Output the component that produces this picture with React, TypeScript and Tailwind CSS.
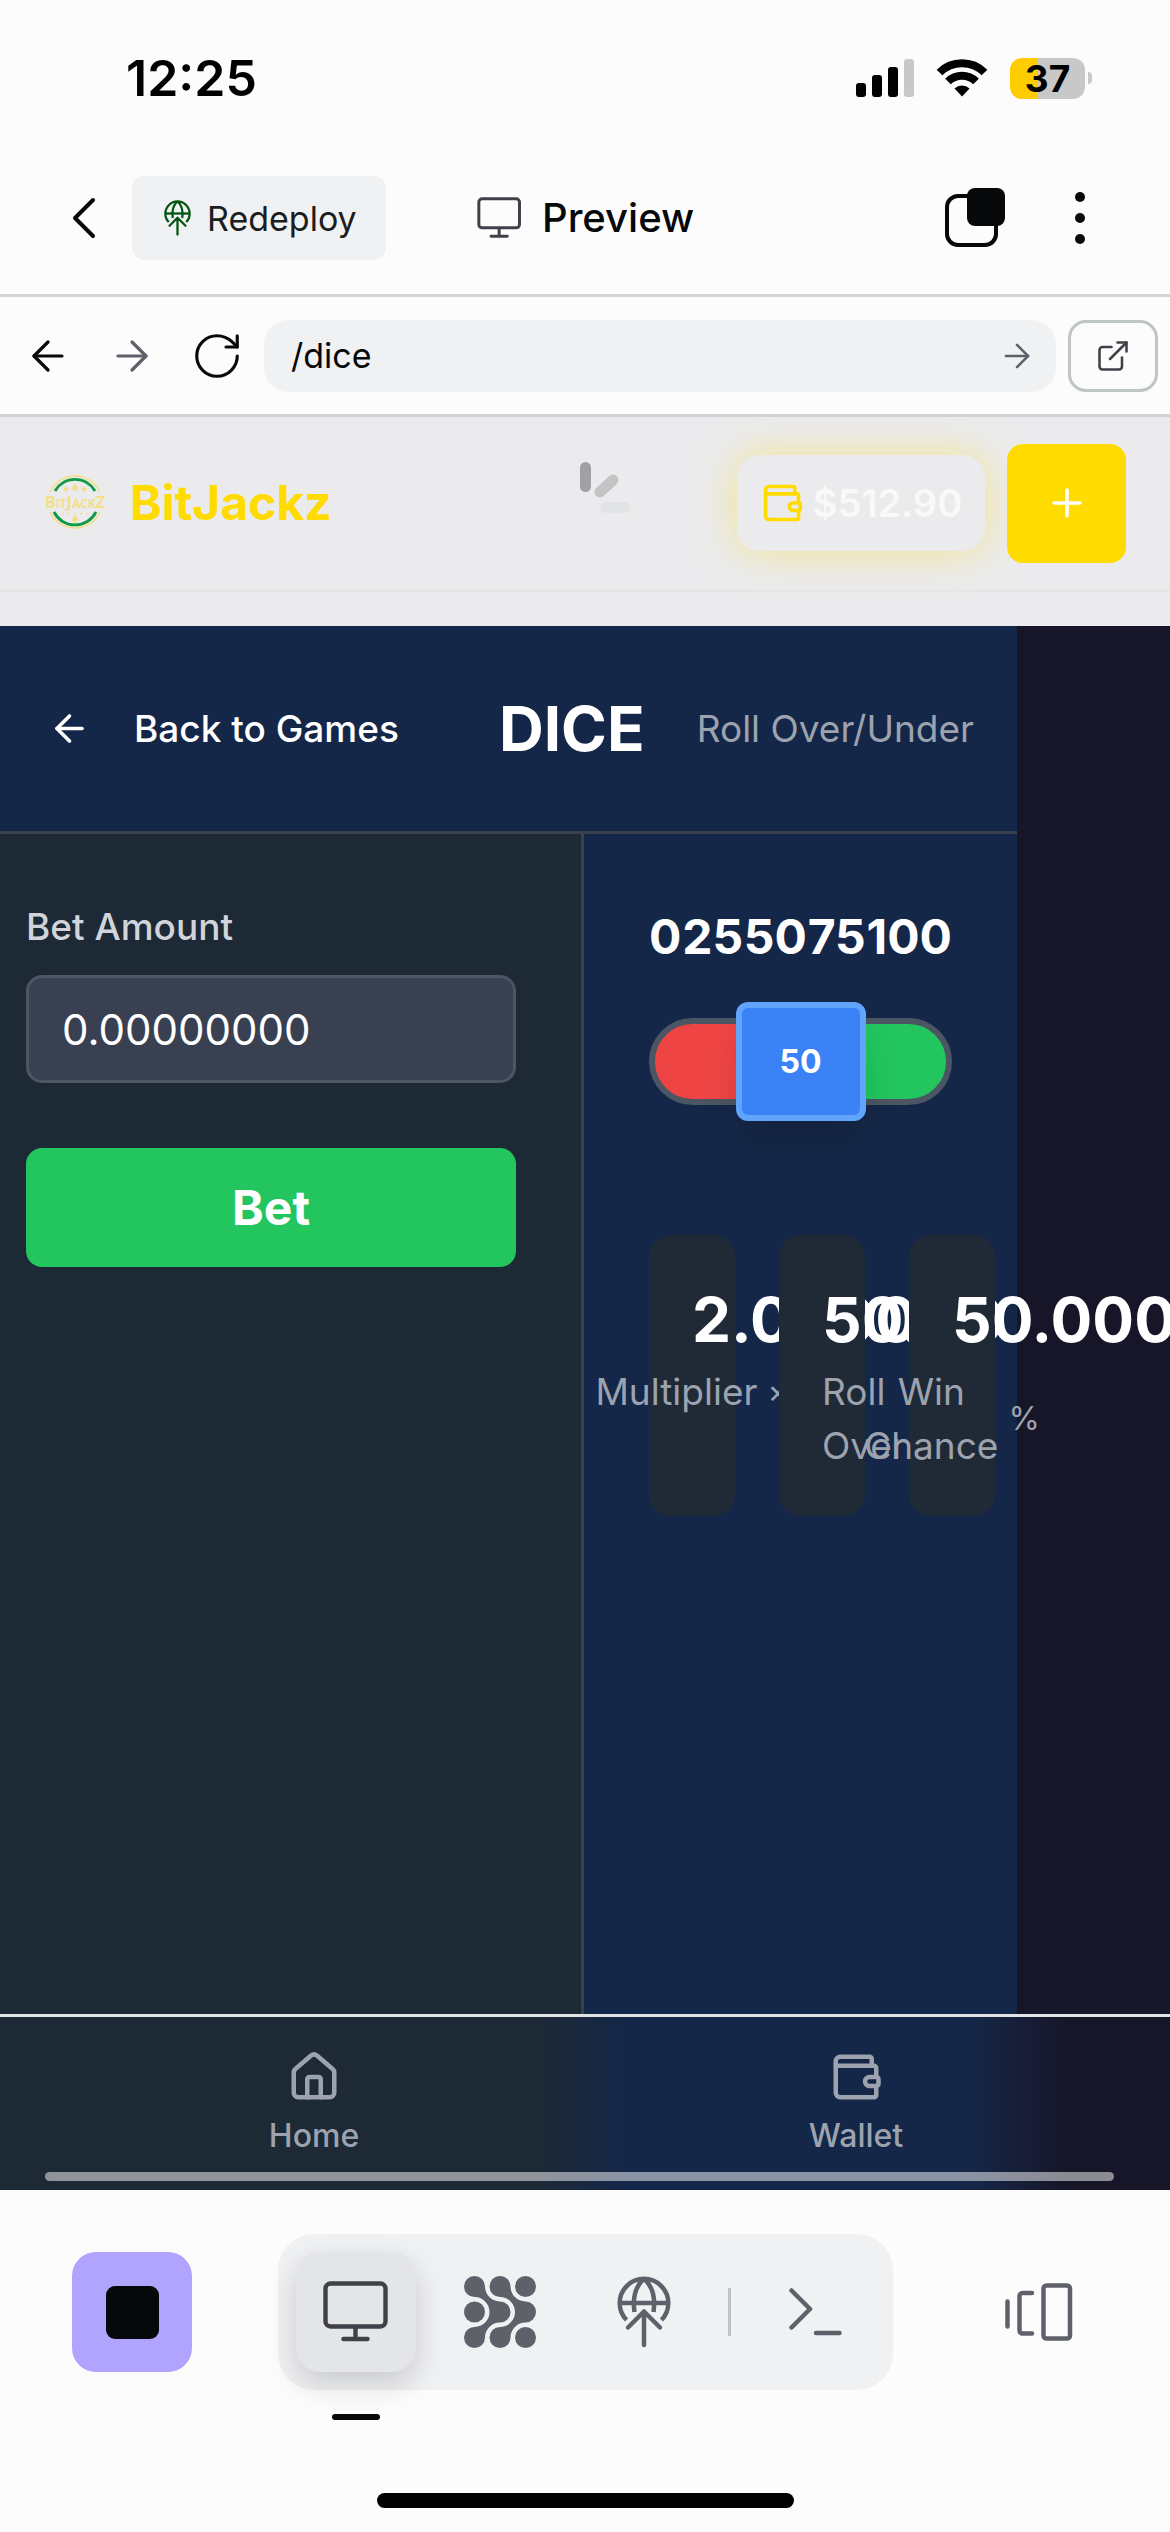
import React from "react";
import { ArrowLeft, ArrowRight, ExternalLink, House, Plus, RotateCw } from "lucide-react";

type IconProps = { className?: string };

function Wallet({ className }: IconProps) {
  return (
    <svg viewBox="0 0 24 24" className={className} fill="none" stroke="currentColor" strokeWidth="2" strokeLinecap="round" strokeLinejoin="round" aria-hidden="true">
      <path d="M19 7V4a1 1 0 0 0-1-1H5a2 2 0 0 0-2 2v14a2 2 0 0 0 2 2h15a1 1 0 0 0 1-1v-4" />
      <path d="M3 6a1 1 0 0 0 1 1h16a1 1 0 0 1 1 1v4h-3a2 2 0 0 0 0 4h3a1 1 0 0 0 1-1v-2a1 1 0 0 0-1-1" />
    </svg>
  );
}

function Monitor({ className }: IconProps) {
  return (
    <svg viewBox="0 0 66 62" className={className} fill="none" stroke="currentColor" strokeWidth="4.4" strokeLinecap="round" aria-hidden="true">
      <rect x="2.5" y="2.5" width="60" height="43" rx="5" />
      <path d="M32.5 46v12M20.5 58h24" />
    </svg>
  );
}

function Deploy({ className }: IconProps) {
  return (
    <svg viewBox="0 0 54 72" className={className} fill="none" stroke="currentColor" strokeWidth="4.5" aria-hidden="true">
      <path d="M9.5 44A24.3 24.3 0 1 1 44.500 44" />
      <path d="M3 27h48" />
      <path d="M26.500 3C19 10 15.500 22 17.500 36M27.500 3C35 10 38.500 22 36.500 36" />
      <path d="M11 51.500 27 35.500l16 16M27 36v33" strokeLinecap="round" strokeLinejoin="round" />
    </svg>
  );
}

function Blobs({ className }: IconProps) {
  const blob =
    "M21 10.5A15 15 0 0 0 36 25.5A10.5 10.5 0 0 1 36 46.5A15 15 0 0 0 21 61.5A10.5 10.5 0 1 1 10.5 51A15 15 0 0 0 10.5 21A10.5 10.5 0 1 1 21 10.5Z";
  return (
    <svg viewBox="0 0 72 72" className={className} fill="currentColor" aria-hidden="true">
      <path d={blob} />
      <path d={blob} transform="translate(25.500 0)" />
      <circle cx="10.500" cy="36" r="10.500" />
      <circle cx="61.500" cy="10.500" r="10.500" />
      <circle cx="61.500" cy="61.500" r="10.500" />
    </svg>
  );
}

function Logo() {
  return (
    <svg viewBox="0 0 62 58" className="h-[58px] w-[62px]" fill="none" aria-hidden="true">
      <g stroke="#f3df86" strokeWidth="1.600">
        <path d="M6 18A27.500 27.500 0 0 1 56 18" />
        <path d="M6 38A27.500 27.500 0 0 0 56 38" />
      </g>
      <g stroke="#119a45" strokeWidth="2.800">
        <path d="M11 17A23 23 0 0 1 51 17" />
        <path d="M10 38A23.500 23.500 0 0 0 52 38" />
      </g>
      <g fill="#f3df86">
        <path d="M31 9.500c1 2 3 3 3 4.800 0 1.400-1.700 1.700-2.400.900l.6 2h-2.400l.6-2c-.7.800-2.400.5-2.400-.9 0-1.800 2-2.800 3-4.800Z" />
        <path d="M22 12c.8 1.500 2.500 2.300 2.500 3.800 0 1.100-1.300 1.400-2 .7l.4 1.500h-1.800l.4-1.500c-.7.700-2 .4-2-.7 0-1.500 1.700-2.300 2.500-3.800Z" />
        <path d="M40 12c.8 1.500 2.500 2.300 2.500 3.800 0 1.100-1.300 1.400-2 .7l.4 1.500h-1.800l.4-1.500c-.7.700-2 .4-2-.7 0-1.500 1.700-2.300 2.500-3.800Z" />
        <path d="M31 41c1.200 2 3.200 3.200 3.200 5 0 1.400-1.700 1.700-2.500.9l.6 2.100h-2.600l.6-2.100c-.8.800-2.500.5-2.500-.9 0-1.800 2-3 3.200-5Z" />
        <circle cx="19" cy="39.500" r="1.100" />
        <circle cx="25" cy="39.500" r="1.100" />
        <circle cx="31" cy="39.500" r="1.100" />
        <circle cx="37" cy="39.500" r="1.100" />
        <circle cx="43" cy="39.500" r="1.100" />
        <text x="31" y="34" textAnchor="middle" fontFamily="Open Sans, sans-serif" fontWeight="700" fontSize="16">
          B<tspan fontSize="12">IT</tspan>J<tspan fontSize="12">ACK</tspan>Z
        </text>
      </g>
    </svg>
  );
}

function StatusBar() {
  return (
    <div className="flex h-[156px] items-center justify-between pr-[78px] pl-[126px] text-black">
      <span className="text-[50px] font-semibold">12:25</span>
      <div className="flex items-center">
        <svg viewBox="0 0 58 38" className="mr-[22px] h-[38px] w-[58px]" aria-hidden="true">
          <rect x="0" y="24" width="10" height="14" rx="3" />
          <rect x="16" y="16" width="10" height="22" rx="3" />
          <rect x="32" y="8" width="10" height="30" rx="3" />
          <rect x="48" y="0" width="10" height="38" rx="3" fill="#c8c8c8" />
        </svg>
        <svg viewBox="0 0 52 38" className="mr-[22px] h-[38px] w-[52px]" fill="none" stroke="#000" strokeWidth="8" aria-hidden="true">
          <path d="M3.500 13.500A32 32 0 0 1 48.500 13.500" />
          <path d="M12 22.500A20 20 0 0 1 40 22.500" />
          <path d="M26 37.500 18.500 29.500A11 11 0 0 1 33.500 29.500Z" fill="#000" stroke="none" />
        </svg>
        <div className="flex h-[41px] w-[75px] items-center justify-center rounded-xl bg-linear-to-r from-[#ffcc00] from-37% to-[#c8c8c8] to-37% text-[37px] leading-none font-bold">37</div>
        <div className="ml-[3px] h-3 w-1 rounded-r-full bg-[#c8c8c8]" />
      </div>
    </div>
  );
}

function TopBar() {
  return (
    <header className="border-b-3 border-[#d4d5d7] pb-[14px]">
      <div className="flex h-[124px] items-center pr-[80px] pl-[72px]">
        <button aria-label="Back" className="mr-9 text-[#07080a]">
          <svg viewBox="0 0 24 42" className="h-[42px] w-6" fill="none" stroke="currentColor" strokeWidth="4" strokeLinecap="round" strokeLinejoin="round">
            <path d="M21 3 3 21l18 18" />
          </svg>
        </button>
        <button className="flex h-[84px] w-[254px] items-center gap-4 rounded-xl bg-[#f0f1f3] pl-8 text-[34px] text-[#1c1d21]">
          <Deploy className="h-9 w-[27px] text-[#00540f]" />
          Redeploy
        </button>
        <h1 className="ml-[91px] flex items-center gap-5 text-[40px] font-medium text-[#07080a]">
          <Monitor className="h-[42px] w-[45px] text-[#3f4048]" />
          Preview
        </h1>
        <button aria-label="Open windows" className="ml-auto">
          <svg viewBox="0 0 60 60" className="size-[60px]" aria-hidden="true">
            <rect x="2" y="8" width="49" height="49" rx="11" fill="none" stroke="#07080a" strokeWidth="4" />
            <rect x="22" y="0" width="38" height="38" rx="8" fill="#07080a" />
          </svg>
        </button>
        <button aria-label="More" className="ml-[65px] flex w-5 flex-col items-center gap-[11px]">
          <span className="size-[10px] rounded-full bg-[#07080a]" />
          <span className="size-[10px] rounded-full bg-[#07080a]" />
          <span className="size-[10px] rounded-full bg-[#07080a]" />
        </button>
      </div>
    </header>
  );
}

function AddressBar() {
  return (
    <div className="flex h-[120px] items-center border-b-3 border-[#d1d2d4] pr-3 pl-6">
      <button aria-label="Go back" className="mr-9 text-[#07080a]">
        <ArrowLeft size={48} strokeWidth={1.6} />
      </button>
      <button aria-label="Go forward" className="mr-[34px] text-[#5f616a]">
        <ArrowRight size={48} strokeWidth={1.6} />
      </button>
      <button aria-label="Reload" className="mr-5 text-[#07080a]">
        <RotateCw size={54} strokeWidth={1.4} />
      </button>
      <form className="mr-3 flex h-[72px] min-w-0 flex-1 items-center rounded-3xl bg-[#f0f1f3] pr-5 pl-[27px]" onSubmit={(e) => e.preventDefault()}>
        <input aria-label="Path" defaultValue="/dice" className="min-w-0 flex-1 bg-transparent text-[34px] text-[#07080a] outline-none" />
        <button aria-label="Go" className="text-[#5f616a]">
          <ArrowRight size={38} strokeWidth={1.6} />
        </button>
      </form>
      <button aria-label="Open in new tab" className="flex h-[72px] w-[90px] items-center justify-center rounded-[18px] border-3 border-[#bfc4c4] text-[#3f4048]">
        <ExternalLink size={36} strokeWidth={1.7} />
      </button>
    </div>
  );
}

function SiteHeader() {
  return (
    <div className="bg-[#ebebed] pb-[34px]">
      <div className="relative flex h-[175px] items-center border-b-3 border-[#e6e6e7] pr-11 pl-11">
        <a href="#home" className="flex items-center gap-6 text-[48px] font-bold text-[#ffdb00]">
          <Logo />
          BitJackz
        </a>
        <svg viewBox="0 0 50 52" className="absolute top-[45px] left-[580px] h-[52px] w-[50px]" strokeLinecap="round" strokeWidth="11" aria-hidden="true">
          <path d="M5.500 5.500v19" stroke="#a0a1a3" />
          <path d="M33 18 20 30" stroke="#c3c4c5" />
          <path d="M25.500 45.500h19" stroke="#e2e3e4" />
        </svg>
        <div className="ml-auto flex h-24 w-[248px] items-center justify-center gap-[9px] rounded-[22px] bg-[#ebebed] text-[38px] font-semibold text-[#f9f9f9] shadow-[0_0_40px_rgba(255,219,0,0.4)]">
          <Wallet className="size-[44px] text-[#ffdb00]" />
          $512.90
        </div>
        <button aria-label="Add funds" className="ml-[22px] flex size-[119px] items-center justify-center rounded-2xl bg-[#ffdb00] text-white">
          <Plus size={44} strokeWidth={2} />
        </button>
      </div>
    </div>
  );
}

function Stat({ value, children }: { value: string; children: React.ReactNode }) {
  return (
    <div className="isolate rounded-[22px] bg-[#202936] p-[43px]">
      <div className="mb-[3px] w-0 text-[62px] leading-[84px] font-bold text-white">{value}</div>
      <div className="flex h-[108px] w-0 justify-center gap-[10px] text-[37px] leading-[54px] text-[#9ca3af]">{children}</div>
    </div>
  );
}

function Game() {
  return (
    <main className="overflow-hidden bg-[#171629] text-white">
      <div className="mr-[153px] bg-[#152748]">
        <div className="flex h-[208px] items-center justify-between border-b-3 border-[#3a4050] pr-[43px] pl-12">
          <a href="#games" className="flex items-center gap-[43px] text-[37px] font-medium">
            <ArrowLeft size={43} strokeWidth={2} />
            Back to Games
          </a>
          <h2 className="ml-12 text-[62px] font-bold">DICE</h2>
          <span className="text-[37px] text-[#9ca3af]">Roll Over/Under</span>
        </div>
        <div className="flex min-h-[1180px]">
          <section className="w-[584px] shrink-0 border-r-3 border-[#3a4050] bg-[#1e2936] pt-[66px] pr-[65px] pl-[26px]">
            <label htmlFor="bet" className="block text-[37px] leading-[54px] font-medium text-[#d1d5db]">
              Bet Amount
            </label>
            <input id="bet" defaultValue="0.00000000" className="mt-[21px] block h-[108px] w-full rounded-2xl border-3 border-[#4b5563] bg-[#384051] px-[33px] text-[42px] text-white outline-none" />
            <button className="mt-[65px] block h-[119px] w-full rounded-2xl bg-[#22c55e] text-[48px] font-bold">Bet</button>
          </section>
          <section className="min-w-0 flex-1 px-[65px] pt-[67px]">
            <div className="flex justify-between text-[48px] leading-[72px] font-bold">
              <span>0</span>
              <span>25</span>
              <span>50</span>
              <span>75</span>
              <span>100</span>
            </div>
            <div className="mt-[45px] flex h-[87px] items-center justify-center rounded-full border-6 border-[#4b5563] bg-linear-to-r from-[#ef4444] from-50% to-[#22c55e] to-50%">
              <button className="h-[119px] w-[130px] shrink-0 rounded-xl border-6 border-[#60a5fa] bg-[#3b82f6] text-[32px] font-bold shadow-[0_26px_40px_-8px_rgba(0,0,0,0.15)]">50</button>
            </div>
            <div className="mt-[130px] grid grid-cols-[repeat(3,86px)] gap-11">
              <Stat value="2.0000">
                <span>Multiplier</span>
                <span className="text-[32px]">×</span>
              </Stat>
              <Stat value="50.00">
                <span className="w-0">Roll Over</span>
              </Stat>
              <Stat value="50.0000">
                <span className="text-center">Win Chance</span>
                <span className="self-center text-[32px]">%</span>
              </Stat>
            </div>
          </section>
        </div>
      </div>
    </main>
  );
}

function SiteNav() {
  return (
    <nav className="border-t-3 border-[#e1e3e5] bg-[linear-gradient(to_right,#1e2936_0,#1e2936_46%,#152748_53%,#152748_83%,#171629_91%)] text-[32px] leading-10 font-medium text-[#9ca3af]">
      <div className="grid grid-cols-2 px-[43px] pt-[33px]">
        <a href="#home" className="flex flex-col items-center gap-3">
          <House size={54} />
          Home
        </a>
        <a href="#wallet" className="flex flex-col items-center gap-3">
          <Wallet className="size-[54px]" />
          Wallet
        </a>
      </div>
      <div className="mx-[45px] mt-4 pb-[9px]">
        <div className="mr-[11px] h-[9px] rounded-full bg-white/50" />
      </div>
    </nav>
  );
}

function Dock() {
  return (
    <footer className="pt-[44px] text-[#5f616a]">
      <div className="flex items-center pr-[97px] pl-[72px]">
        <button aria-label="Stop" className="flex size-[120px] items-center justify-center rounded-3xl bg-[#b1a4ff]">
          <span className="size-[53px] rounded-[9px] bg-[#07080a]" />
        </button>
        <div className="ml-[86px] flex h-[156px] w-[615px] items-center rounded-[36px] bg-[#f0f1f3] pl-[18px]">
          <button aria-label="Preview" className="relative flex size-[120px] items-center justify-center rounded-3xl bg-[#e4e5e7] text-[#3f4048] shadow-[0_12px_30px_rgba(0,0,0,0.16)]">
            <Monitor className="h-[62px] w-[66px]" />
            <span className="absolute -bottom-12 h-[6px] w-12 rounded-full bg-[#07080a]" />
          </button>
          <button aria-label="Agent" className="ml-6 flex size-[120px] items-center justify-center rounded-3xl">
            <Blobs className="size-[72px]" />
          </button>
          <button aria-label="Deployments" className="ml-6 flex size-[120px] items-center justify-center rounded-3xl">
            <Deploy className="h-[72px] w-[54px]" />
          </button>
          <span className="ml-6 h-12 w-[3px] bg-[#c0c1c4]" />
          <button aria-label="Shell" className="ml-6 flex size-[120px] items-center justify-center rounded-3xl">
            <svg viewBox="0 0 53 48" className="h-12 w-[53px]" fill="none" stroke="currentColor" strokeWidth="4.500" strokeLinecap="round" strokeLinejoin="round">
              <path d="M2.500 2.500 21 21 2.500 39.500M27 45h23.500" />
            </svg>
          </button>
        </div>
        <button aria-label="Tab overview" className="ml-auto">
          <svg viewBox="0 0 68 60" className="h-[60px] w-[68px]" fill="none" stroke="currentColor" strokeWidth="4.500" strokeLinecap="round" strokeLinejoin="round" aria-hidden="true">
            <path d="M2.500 19.500v25M27 11H17.500a3 3 0 0 0-3 3v34.500a3 3 0 0 0 3 3H27" />
            <rect x="38.500" y="3.500" width="26.500" height="53" rx="3" />
          </svg>
        </button>
      </div>
      <div className="pt-[103px] pb-6">
        <div className="mx-auto h-[15px] w-[417px] rounded-full bg-black" />
      </div>
    </footer>
  );
}

export default function App() {
  return (
    <div className="min-h-screen overflow-x-hidden bg-[#fcfcfc] font-[Inter,sans-serif]">
      <StatusBar />
      <TopBar />
      <AddressBar />
      <SiteHeader />
      <Game />
      <SiteNav />
      <Dock />
    </div>
  );
}
